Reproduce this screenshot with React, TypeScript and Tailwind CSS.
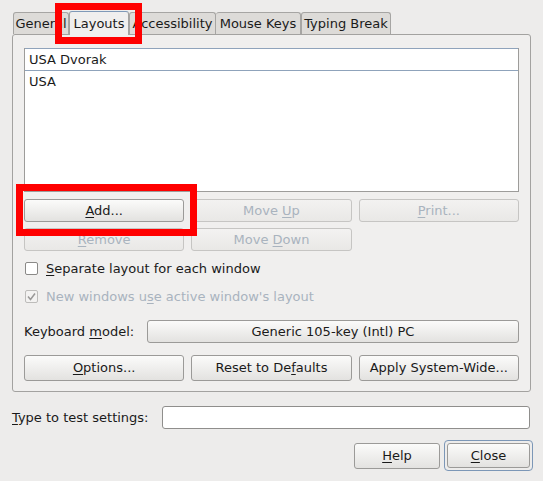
import React from "react";

const U = ({ children }: { children: React.ReactNode }) => (
  <span className="underline underline-offset-[2px] decoration-1">{children}</span>
);

function Btn({
  children,
  disabled,
  h = "h-[23px]",
}: {
  children: React.ReactNode;
  disabled?: boolean;
  h?: string;
}) {
  return (
    <div
      className={
        disabled
          ? `${h} flex items-center justify-center rounded-[3px] border border-[#c6c5c3] bg-gradient-to-b from-[#f3f2f1] to-[#e9e8e6] text-[#a9b3be]`
          : `${h} flex items-center justify-center rounded-[3px] border border-[#9b9a98] bg-gradient-to-b from-[#fbfbfa] to-[#e3e2e0] text-[#1a1a1a]`
      }
    >
      <span className="whitespace-pre">{children}</span>
    </div>
  );
}

export default function App() {
  return (
    <div className="relative w-[543px] h-[481px] overflow-hidden bg-[#edeceb] font-['DejaVu_Sans',sans-serif] text-[13px] leading-[16px] text-[#1a1a1a]">
      {/* Tabs */}
      <div className="mt-[11px] flex h-[23px] items-end pl-[13px]">
        <div className="flex h-[22px] w-[56px] items-center justify-center rounded-t-[3px] border border-b-0 border-[#a6a5a3] bg-[#dddbd8]">
          General
        </div>
        <div className="relative z-10 -mb-px flex h-[24px] w-[60px] items-center justify-center rounded-t-[3px] border border-b-0 border-[#a3a2a0] border-t-[#7f99b8] bg-[#f0efee]">
          Layouts
        </div>
        <div className="flex h-[22px] w-[87px] items-center justify-center rounded-t-[3px] border border-b-0 border-[#a6a5a3] bg-[#dddbd8]">
          Accessibility
        </div>
        <div className="flex h-[22px] w-[85px] items-center justify-center rounded-t-[3px] border border-b-0 border-l-0 border-[#a6a5a3] bg-[#dddbd8]">
          Mouse Keys
        </div>
        <div className="flex h-[22px] w-[90px] items-center justify-center rounded-t-[3px] border border-b-0 border-[#a6a5a3] bg-[#dddbd8]">
          Typing Break
        </div>
      </div>

      {/* Panel */}
      <div className="mx-[12px] h-[358px] w-[519px] rounded-[3px] border border-[#a3a2a0] bg-[#f0efee] px-[11px] pt-[13px]">
        {/* List */}
        <div className="h-[144px] border border-t-0 border-[#9d9c9a] bg-white">
          <div className="flex h-[23px] items-center border-y border-[#8fa3bb] pl-[4px]">
            USA Dvorak
          </div>
          <div className="flex h-[22px] items-center pl-[4px]">USA</div>
        </div>

        {/* Buttons */}
        <div className="mt-[7px] grid grid-cols-3 gap-x-[7px] gap-y-[6px]">
          <Btn>
            <U>A</U>dd...
          </Btn>
          <Btn disabled>
            {"Move "}
            <U>U</U>p
          </Btn>
          <Btn disabled>
            <U>P</U>rint...
          </Btn>
          <Btn disabled>
            <U>R</U>emove
          </Btn>
          <Btn disabled>
            {"Move "}
            <U>D</U>own
          </Btn>
        </div>

        {/* Checkboxes */}
        <div className="mt-[11px] flex h-[13px] items-center gap-[8px] pl-[1px]">
          <div className="h-[13px] w-[13px] rounded-[2px] border border-[#8a8987] bg-white" />
          <span>
            <U>S</U>eparate layout for each window
          </span>
        </div>
        <div className="mt-[15px] flex h-[13px] items-center gap-[8px] pl-[1px] text-[#a9b3be]">
          <div className="flex h-[13px] w-[13px] items-center justify-center rounded-[2px] border border-[#bdbcba] bg-[#f3f2f1]">
            <svg width="11" height="11" viewBox="0 0 11 11">
              <path d="M2 5.5 L4.5 8.5 L9 2.5" fill="none" stroke="#9a9998" strokeWidth="1.5" />
            </svg>
          </div>
          <span>
            New windows u<U>s</U>e active window's layout
          </span>
        </div>

        {/* Keyboard model */}
        <div className="mt-[17px] flex items-center">
          <div className="w-[123px]">
            Keyboard <U>m</U>odel:
          </div>
          <div className="flex-1">
            <Btn h="h-[23px]">Generic 105-key (Intl) PC</Btn>
          </div>
        </div>

        {/* Options row */}
        <div className="mt-[12px] grid grid-cols-3 gap-x-[7px]">
          <Btn h="h-[26px]">
            <U>O</U>ptions...
          </Btn>
          <Btn h="h-[26px]">
            {"Reset to De"}
            <U>f</U>aults
          </Btn>
          <Btn h="h-[26px]">Apply System-Wide...</Btn>
        </div>
      </div>

      {/* Type to test */}
      <div className="mt-[14px] flex items-center pl-[12px] pr-[13px]">
        <div className="w-[150px]">
          <U>T</U>ype to test settings:
        </div>
        <div className="h-[23px] flex-1 rounded-[3px] border border-[#8f8e8c] bg-white" />
      </div>

      {/* Bottom buttons */}
      <div className="mt-[11px] flex items-center justify-end gap-[4px] pr-[10px]">
        <div className="w-[86px]">
          <Btn h="h-[26px]">
            <U>H</U>elp
          </Btn>
        </div>
        <div className="w-[89px] rounded-[4px] border border-[#7c97b7] p-[2px]">
          <Btn h="h-[25px]">
            <U>C</U>lose
          </Btn>
        </div>
      </div>

      {/* Red annotation boxes */}
      <div className="pointer-events-none absolute left-[55px] top-[3px] h-[41px] w-[87px] border-[7px] border-[#ff0000]" />
      <div className="pointer-events-none absolute left-[16px] top-[184px] h-[52px] w-[181px] border-[7px] border-[#ff0000]" />
    </div>
  );
}
